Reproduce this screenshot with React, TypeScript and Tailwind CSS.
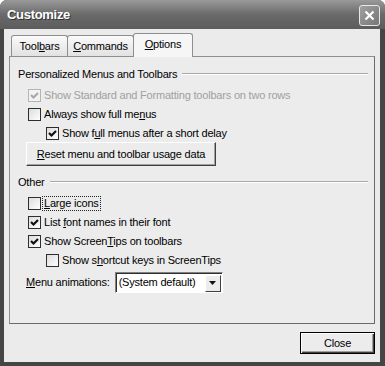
import type { ReactNode } from "react";

// mnemonic letter
const U = ({ children }: { children: ReactNode }) => (
	<span className="underline decoration-1 underline-offset-[1px]">{children}</span>
);

const Check = ({ checked, disabled }: { checked?: boolean; disabled?: boolean }) => (
	<div
		className={`w-[13px] h-[13px] shrink-0 border flex items-center justify-center ${
			disabled ? "border-[#b4b4b4] bg-[#f2f2f2]" : "border-[#2e2e2e] bg-gradient-to-br from-[#dcdcdc] to-white"
		}`}
	>
		{checked && (
			<svg width="11" height="11" viewBox="0 0 11 11">
				<polyline
					points="2,5 4.5,7.5 9,3"
					fill="none"
					stroke={disabled ? "#a8a8a8" : "#111"}
					strokeWidth="2.2"
				/>
			</svg>
		)}
	</div>
);

const Row = ({
	children,
	checked,
	disabled,
	indent,
	focus,
}: {
	children: ReactNode;
	checked?: boolean;
	disabled?: boolean;
	indent?: boolean;
	focus?: boolean;
}) => (
	<div className={`h-[19px] flex items-center gap-[2px] ${indent ? "ml-[28px]" : "ml-[10px]"}`}>
		<Check checked={checked} disabled={disabled} />
		<span
			className={`px-[1px] leading-[13px] ${disabled ? "text-[#a0a0a0]" : "text-black"} ${
				focus ? "outline outline-1 outline-dotted outline-[#222]" : ""
			}`}
		>
			{children}
		</span>
	</div>
);

const Header = ({ title, className }: { title: string; className: string }) => (
	<div className={`h-[19px] flex items-center gap-[5px] ${className}`}>
		<span>{title}</span>
		<div className="flex-1 h-[2px] border-t border-[#a9a9a9] border-b border-b-white mt-[-1px]" />
	</div>
);

export default function App() {
	return (
		<div className="w-[385px] h-[366px] bg-white font-['Liberation_Sans',Arial,sans-serif] text-[11px] tracking-[-0.2px] text-black">
			<div className="w-full h-full flex flex-col rounded-t-[7px] overflow-hidden bg-[#454545]">
				{/* title bar */}
				<div className="h-[29px] shrink-0 flex items-center justify-between pl-[7px] pr-[5px] bg-gradient-to-b from-[#9a9a9a] via-[#6a6a6a] to-[#5c5c5c]">
					<span className="text-white font-bold text-[13px] tracking-[-0.3px] [text-shadow:1px_1px_0_#333]">
						Customize
					</span>
					<div className="w-[21px] h-[21px] mt-[2px] rounded-[3px] border border-[#e8e8e8] bg-gradient-to-br from-[#a0a0a0] to-[#777] flex items-center justify-center">
						<svg width="11" height="11" viewBox="0 0 11 11">
							<path d="M1.5 1.5 L9.5 9.5 M9.5 1.5 L1.5 9.5" stroke="white" strokeWidth="2.2" />
						</svg>
					</div>
				</div>

				{/* body */}
				<div className="flex-1 mx-[4px] mr-[5px] mb-[4px] bg-[#ebebeb] px-[5px] pt-[4px] flex flex-col">
					<div className="h-[24px] flex items-end pl-[2px] relative z-10 -mb-px">
						<div className="w-[57px] h-[21px] mb-px border border-b-0 border-[#8e8e8e] rounded-t-[3px] bg-gradient-to-b from-[#fafafa] to-[#e2e2e2] flex items-center justify-center">
							Tool<U>b</U>ars
						</div>
						<div className="w-[67px] h-[21px] mb-px -ml-px border border-b-0 border-[#8e8e8e] rounded-t-[3px] bg-gradient-to-b from-[#fafafa] to-[#e2e2e2] flex items-center justify-center">
							<U>C</U>ommands
						</div>
						<div className="w-[60px] h-[24px] -ml-px border border-b-0 border-[#8e8e8e] rounded-t-[3px] bg-[#f6f6f6] flex items-center justify-center pb-[2px]">
							<U>O</U>ptions
						</div>
					</div>

					<div className="h-[268px] border border-[#8e8e8e] border-r-[#6a6a6a] border-b-[#6a6a6a] bg-[#ececec] pl-[8px] pr-[6px] flex flex-col">
						<Header title="Personalized Menus and Toolbars" className="mt-[8px]" />
						<div className="mt-[2px]">
							<Row checked disabled>
								Show Standard and Formatting toolbars on two rows
							</Row>
							<Row>
								Always show full me<U>n</U>us
							</Row>
							<Row checked indent>
								Show f<U>u</U>ll menus after a short delay
							</Row>
						</div>
						<button
							type="button"
							className="-mt-px ml-[8px] w-[190px] h-[24px] bg-[#ececec] border border-t-white border-l-white border-r-[#404040] border-b-[#404040] shadow-[inset_-1px_-1px_0_#a0a0a0] flex items-center justify-center"
						>
							<span>
								<U>R</U>eset menu and toolbar usage data
							</span>
						</button>

						<Header title="Other" className="mt-[7px]" />
						<div className="mt-[2px]">
							<Row focus>
								<U>L</U>arge icons
							</Row>
							<Row checked>
								List <U>f</U>ont names in their font
							</Row>
							<Row checked>
								Show Screen<U>T</U>ips on toolbars
							</Row>
							<Row indent>
								Show s<U>h</U>ortcut keys in ScreenTips
							</Row>
						</div>
						<div className="mt-[2px] ml-[8px] flex items-center gap-[5px]">
							<span>
								<U>M</U>enu animations:
							</span>
							<div className="w-[108px] h-[21px] border border-t-[#808080] border-l-[#808080] border-r-white border-b-white shadow-[inset_1px_1px_0_#303030] bg-white flex items-center pl-[3px] pr-[1px]">
								<span className="flex-1">(System default)</span>
								<div className="w-[16px] h-[17px] mt-px bg-[#ececec] border border-t-white border-l-white border-r-[#404040] border-b-[#404040] flex items-center justify-center">
									<svg width="7" height="4" viewBox="0 0 7 4">
										<path d="M0 0 H7 L3.5 4 Z" fill="#111" />
									</svg>
								</div>
							</div>
						</div>
					</div>

					<div className="flex justify-end mt-[8px]">
						<button
							type="button"
							className="w-[75px] h-[22px] border border-black bg-[#ececec] shadow-[inset_1px_1px_0_#fff,inset_-1px_-1px_0_#404040,inset_-2px_-2px_0_#a0a0a0] flex items-center justify-center"
						>
							Close
						</button>
					</div>
				</div>
			</div>
		</div>
	);
}
